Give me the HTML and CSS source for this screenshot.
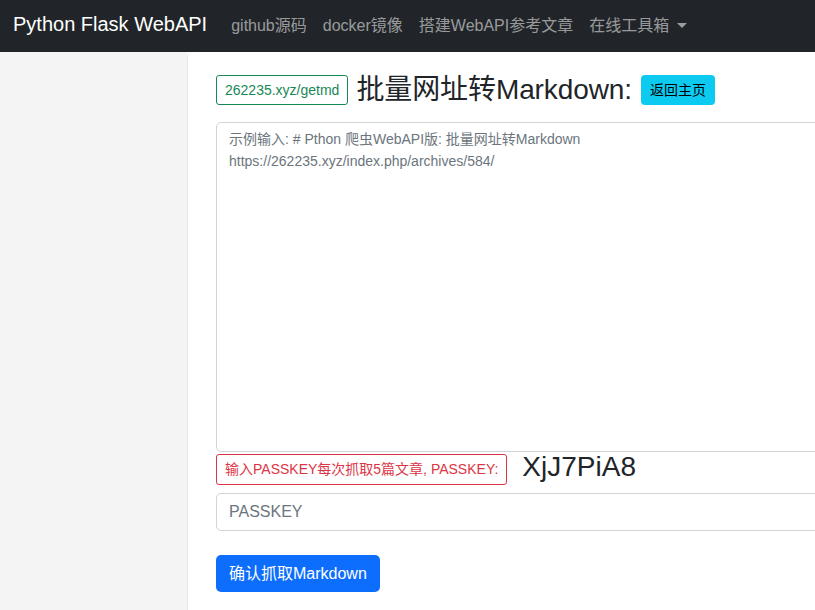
FILE: index.html
```html
<!DOCTYPE html>
<html lang="zh-CN">
<head>
  <meta charset="UTF-8">
  <meta name="viewport" content="width=device-width, initial-scale=1.0">
  <title>批量网址转Markdown</title>
  <link rel="stylesheet" href="styles.css">
</head>
<body>
  <!-- Navbar -->
  <nav class="navbar">
    <a class="brand" href="#">Python Flask WebAPI</a>
    <ul class="nav-links">
      <li><a href="#">github源码</a></li>
      <li><a href="#">docker镜像</a></li>
      <li><a href="#">搭建WebAPI参考文章</a></li>
      <li><a href="#" class="dropdown">在线工具箱</a></li>
    </ul>
  </nav>

  <div class="layout">
    <aside class="sidebar"></aside>

    <main class="content">
      <div class="title-row">
        <span class="tag tag-green">262235.xyz/getmd</span>
        <h3>批量网址转Markdown:</h3>
        <a class="btn btn-info" href="#">返回主页</a>
      </div>

      <textarea class="form-control urls" placeholder="示例输入: # Pthon 爬虫WebAPI版: 批量网址转Markdown
https://262235.xyz/index.php/archives/584/"></textarea>

      <div class="key-row">
        <span class="tag tag-red">输入PASSKEY每次抓取5篇文章, PASSKEY:</span>
        <span class="key">XjJ7PiA8</span>
      </div>

      <input class="form-control passkey" type="text" placeholder="PASSKEY">

      <button class="btn btn-primary">确认抓取Markdown</button>
    </main>
  </div>
</body>
</html>
```

FILE: styles.css
```css
* {
  margin: 0;
  padding: 0;
  box-sizing: border-box;
}

body {
  font-family: "Liberation Sans", Arial, "Noto Sans CJK SC", sans-serif;
  font-size: 16px;
  color: #212529;
  background-color: #fff;
  overflow: hidden;
  height: 610px;
}

a {
  text-decoration: none;
}

/* Navbar */
.navbar {
  height: 52px;
  background-color: #212529;
  display: flex;
  align-items: center;
  padding: 0 13px;
}

.brand {
  color: #fff;
  font-size: 20px;
  margin-right: 24px;
  position: relative;
  top: -2px;
}

.nav-links {
  list-style: none;
  display: flex;
  gap: 16px;
  position: relative;
  top: -2px;
}

.nav-links a {
  color: rgba(255, 255, 255, 0.55);
  font-size: 16px;
}

.dropdown::after {
  content: "";
  display: inline-block;
  margin-left: 8px;
  vertical-align: 3px;
  border-top: 5px solid rgba(255, 255, 255, 0.55);
  border-left: 5px solid transparent;
  border-right: 5px solid transparent;
}

/* Layout */
.layout {
  display: flex;
  height: 558px;
}

.sidebar {
  width: 187px;
  flex-shrink: 0;
  background-color: #f4f4f4;
}

.content {
  flex: 1;
  min-width: 0;
  overflow: hidden;
  padding: 23px 0 0 28px;
  border-left: 1px solid #e6e6e6;
  border-top-left-radius: 6px;
  background-color: #fff;
}

.title-row {
  display: flex;
  align-items: center;
  gap: 8px;
  margin-bottom: 17px;
}

.title-row h3 {
  font-size: 28px;
  font-weight: 400;
  line-height: 30px;
  letter-spacing: -0.1px;
}

.tag {
  display: inline-block;
  font-size: 14px;
  line-height: 28px;
  padding: 0 8px;
  border: 1px solid;
  border-radius: 3px;
  white-space: nowrap;
}

.tag-green {
  color: #198754;
  border-color: #198754;
}

.tag-red {
  color: #dc3545;
  border-color: #dc3545;
  line-height: 29px;
}

.btn {
  display: inline-block;
  border: none;
  border-radius: 4px;
  font-family: inherit;
  cursor: pointer;
  white-space: nowrap;
}

.btn-info {
  background-color: #0dcaf0;
  color: #000;
  font-size: 14px;
  line-height: 30px;
  padding: 0 9px;
  margin-left: 1px;
  min-width: 74px;
}

.btn-primary {
  background-color: #0d6efd;
  color: #fff;
  font-size: 16px;
  line-height: 37px;
  padding: 0 13px;
  border-radius: 5px;
}

.form-control {
  display: block;
  width: 640px;
  flex-shrink: 0;
  border: 1px solid #ced4da;
  border-radius: 5px;
  font-family: inherit;
  color: #212529;
  background-color: #fff;
}

.form-control::placeholder {
  color: #6c757d;
}

.urls {
  height: 330px;
  padding: 5px 12px;
  font-size: 14px;
  line-height: 22px;
  resize: none;
}

.key-row {
  display: flex;
  align-items: center;
  gap: 15px;
  margin-top: 2px;
  margin-bottom: 8px;
}

.key {
  font-size: 28px;
  line-height: 30px;
  position: relative;
  top: -3px;
  white-space: nowrap;
}

.passkey {
  height: 38px;
  padding: 6px 12px;
  font-size: 16px;
  margin-bottom: 24px;
}
```
